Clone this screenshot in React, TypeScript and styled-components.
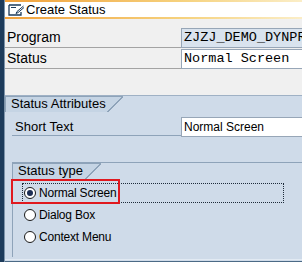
import React from "react";
import styled, { createGlobalStyle } from "styled-components";

const Global = createGlobalStyle`
  html, body { margin: 0; padding: 0; background: #f0f0f0; }
  body { font-family: "Liberation Sans", Arial, sans-serif; }
`;

const LINE = "#8ea3b9";
const TABBG = "#c5d4e4";

const Page = styled.div`
  width: 302px;
  height: 262px;
  overflow: hidden;
  display: flex;
  background: #f0f0f0;
`;

const LeftStrip = styled.div`
  width: 4px;
  flex: none;
  background: #1d3b5b;
  border-right: 1px solid #7c93aa;
`;

const Main = styled.div`
  flex: 1;
  min-width: 0;
  display: flex;
  flex-direction: column;
`;

const TitleBar = styled.div`
  height: 15px;
  border-top: 2px solid #1d3b5b;
  background: #ffffff;
  display: flex;
  align-items: center;
  gap: 2px;
  padding-left: 3px;
  font-size: 13px;
  color: #000;
  border-bottom: 2px solid transparent;
  border-image: linear-gradient(to right, #f1a03a, #f6d27e 60%, #fbeec8) 1;
`;

const Header = styled.div`
  padding: 9px 0 0 0;
  height: 67px;
  display: flex;
  flex-direction: column;
`;

const FieldRow = styled.div`
  display: flex;
  height: 20px;
  margin-bottom: 1px;
`;

const Label = styled.div<{ $line: string; $indent?: number; $size: number }>`
  width: ${(p) => 176 - (p.$indent ?? 0)}px;
  flex: none;
  box-sizing: border-box;
  padding-left: ${(p) => (p.$indent ? 3 : 2)}px;
  font-size: ${(p) => p.$size}px;
  line-height: 19px;
  color: #000;
  border-bottom: 1px solid ${(p) => p.$line};
`;

const Input = styled.div<{ $bg: string; $mono?: boolean }>`
  flex: 1;
  box-sizing: border-box;
  height: 20px;
  background: ${(p) => p.$bg};
  border: 1px solid #97a6b7;
  border-right: none;
  padding-left: 2px;
  white-space: nowrap;
  overflow: hidden;
  font-family: ${(p) =>
    p.$mono ? `"Liberation Mono", "Courier New", monospace` : `"Liberation Sans", Arial, sans-serif`};
  font-size: ${(p) => (p.$mono ? "13.5px" : "12px")};
  line-height: 18px;
  color: #000;
`;

const Panel = styled.div`
  flex: 1;
  background: #cfdbe9;
  border-top: 1px solid #9fb1c5;
  display: flex;
  flex-direction: column;
`;

const BottomLine = styled.div`
  height: 1px;
  border-top: 1px solid #e2eaf3;
  border-bottom: 1px solid #4b6a86;
  margin-top: 2px;
`;

const TabStrip = styled.div`
  display: flex;
  height: 16px;
`;

const Tab = styled.div<{ $width: number; $left?: boolean }>`
  position: relative;
  width: ${(p) => p.$width}px;
  box-sizing: border-box;
  height: 16px;
  background: ${TABBG};
  border-left: ${(p) => (p.$left ? `1px solid ${LINE}` : "none")};
  box-shadow: inset 0 1px 0 ${LINE};
  padding-left: 5px;
  font-size: 13px;
  line-height: 16px;
  color: #000;
  white-space: nowrap;
  &::after {
    content: "";
    position: absolute;
    left: 100%;
    top: 0;
    width: 16px;
    height: 16px;
    box-shadow: inset 0 1px 0 ${LINE};
    background: linear-gradient(
      to bottom right,
      ${TABBG} 0,
      ${TABBG} 47%,
      ${LINE} 47%,
      ${LINE} 54%,
      transparent 54%
    );
  }
`;

const ShortRow = styled.div`
  display: flex;
  height: 19px;
  margin: 5px 0 0 7px;
`;

const Group = styled.div`
  margin: 26px 0 0 7px;
  border-top: 1px solid ${LINE};
  border-left: 1px solid ${LINE};
  flex: 1;
  display: flex;
  flex-direction: column;
`;

const RadioList = styled.div`
  display: flex;
  flex-direction: column;
  gap: 2px;
  padding: 4px 0 0 9px;
`;

const RadioRow = styled.div<{ $focus?: boolean }>`
  position: relative;
  width: 262px;
  box-sizing: border-box;
  height: 20px;
  display: flex;
  align-items: center;
  gap: 3px;
  padding-left: 1px;
  font-size: 12px;
  letter-spacing: -0.2px;
  color: #000;
  border: 1px dotted ${(p) => (p.$focus ? "#1e2b3a" : "transparent")};
`;

const Circle = styled.span<{ $on?: boolean }>`
  width: 12px;
  height: 12px;
  flex: none;
  box-sizing: border-box;
  border-radius: 50%;
  border: 1.5px solid #1a1a1a;
  background: #ffffff;
  display: flex;
  align-items: center;
  justify-content: center;
  &::after {
    content: "";
    width: 6px;
    height: 6px;
    border-radius: 50%;
    background: ${(p) => (p.$on ? "#1d2e54" : "transparent")};
  }
`;

const Highlight = styled.div`
  position: absolute;
  left: -12px;
  top: -5px;
  width: 109px;
  height: 25px;
  box-sizing: border-box;
  border: 2px solid #e0191f;
  pointer-events: none;
`;

function CreateIcon() {
  return (
    <svg width="16" height="12" viewBox="0 0 16 12">
      <path d="M1 1 H13 M1 1 V11 H13 V8" stroke="#1d3b5b" strokeWidth="1.3" fill="none" />
      <path d="M3 3.5 H8" stroke="#1d3b5b" strokeWidth="1" />
      <path d="M15.5 2 L9 7.5 L8 9.5 L10 8.6 L16 3.5" stroke="#1d3b5b" strokeWidth="1" fill="#fff" />
    </svg>
  );
}

export default function App() {
  return (
    <>
      <Global />
      <Page>
        <LeftStrip />
        <Main>
          <TitleBar>
            <CreateIcon />
            <span>Create Status</span>
          </TitleBar>
          <Header>
            <FieldRow>
              <Label $line="#a3a3a3" $size={14}>Program</Label>
              <Input $bg="#d9e3ee" $mono>ZJZJ_DEMO_DYNPRO</Input>
            </FieldRow>
            <FieldRow>
              <Label $line="#a3a3a3" $size={14}>Status</Label>
              <Input $bg="#ffffff" $mono>Normal Screen</Input>
            </FieldRow>
          </Header>
          <Panel>
            <TabStrip>
              <Tab $width={102} $left>Status Attributes</Tab>
            </TabStrip>
            <ShortRow>
              <Label $line={LINE} $indent={7} $size={13}>Short Text</Label>
              <Input $bg="#ffffff">Normal Screen</Input>
            </ShortRow>
            <Group>
              <TabStrip>
                <Tab $width={72}>Status type</Tab>
              </TabStrip>
              <RadioList>
                <RadioRow $focus>
                  <Circle $on />
                  <span>Normal Screen</span>
                  <Highlight />
                </RadioRow>
                <RadioRow>
                  <Circle />
                  <span>Dialog Box</span>
                </RadioRow>
                <RadioRow>
                  <Circle />
                  <span>Context Menu</span>
                </RadioRow>
              </RadioList>
            </Group>
            <BottomLine />
          </Panel>
        </Main>
      </Page>
    </>
  );
}
